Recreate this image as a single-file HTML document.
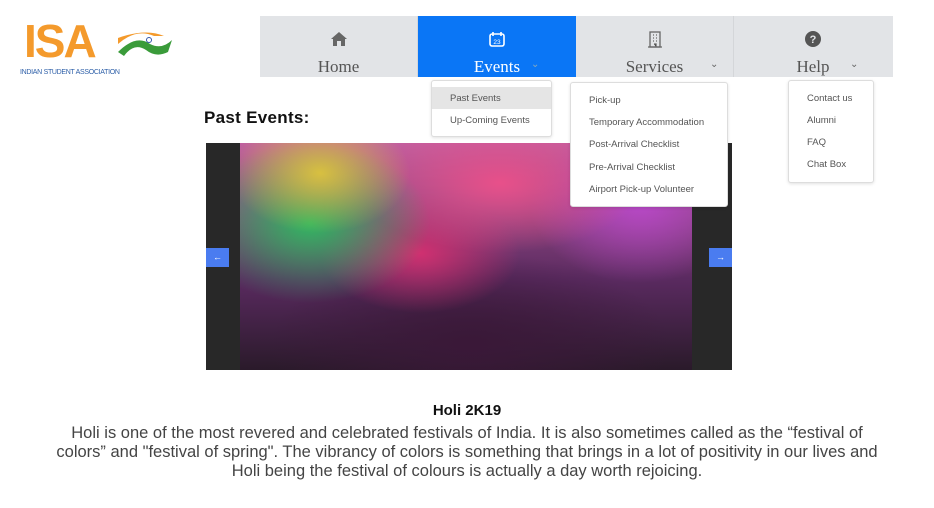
<!DOCTYPE html>
<html><head><style>
body{margin:0;width:934px;height:508px;background:#fff;position:relative;font-family:"Liberation Sans",sans-serif;overflow:hidden}
.nav{position:absolute;left:260px;top:16px;width:633px;height:61px;background:#e2e4e7;display:flex}
.tab{width:158px;height:61px;position:relative;text-align:center;font-family:"Liberation Serif",serif;font-size:17px;color:#555;border-right:1px solid #d4d6d9;box-sizing:border-box}
.tab .lbl{position:absolute;top:41px;left:0;right:0}
.tab svg{position:absolute;top:14px;left:50%;margin-left:-9px}
.car{position:absolute;top:43px;font-size:10px;color:#666;font-family:"Liberation Sans",sans-serif}
.dd{position:absolute;z-index:5;background:#fff;border:1px solid #ddd;border-radius:3px;box-shadow:0 1px 3px rgba(0,0,0,.12);font-size:9.5px;color:#555}
.dd div{position:absolute;left:18px}
</style></head><body>
<div style="position:absolute;left:22px;top:16px;width:130px;height:62px">
<div style="position:absolute;left:2px;top:0;font:900 46px/50px 'Liberation Sans',sans-serif;color:#f49a2c;letter-spacing:-2px">ISA</div>
<svg style="position:absolute;left:94px;top:10px" width="58" height="30"><path d="M2 26 Q20 8 34 18 Q46 24 56 14 L52 26 Q40 32 30 24 Q18 16 8 30Z" fill="#3a9b3a"/><path d="M2 18 Q20 2 38 10 L48 10 Q30 2 2 12Z" fill="#f49a2c"/><circle cx="33" cy="14" r="2.5" fill="none" stroke="#3355aa" stroke-width="1"/></svg>
<div style="position:absolute;left:-2px;top:53px;font-size:7px;color:#2d5fa8;white-space:nowrap;letter-spacing:-.3px">INDIAN STUDENT ASSOCIATION</div>
</div>
<div class="nav">
<div class="tab"><svg width="18" height="18" viewBox="0 0 18 18"><path d="M1 9 L9 2 L17 9 L15 9 L15 16 L11 16 L11 11 L7 11 L7 16 L3 16 L3 9Z" fill="#666"/></svg><div class="lbl">Home</div></div>
<div class="tab" style="background:#0a76f6;color:#fff;border:none"><svg width="18" height="18" viewBox="0 0 18 18"><rect x="2" y="4" width="14" height="12" rx="2" fill="none" stroke="#fff" stroke-width="1.6"/><path d="M5 2v4M13 2v4" stroke="#fff" stroke-width="1.6"/><text x="9" y="14" font-size="6.5" fill="#fff" text-anchor="middle" font-family="Liberation Sans">23</text></svg><div class="lbl">Events</div><span class="car" style="left:113px;color:#8ab">⌄</span></div>
<div class="tab"><svg width="18" height="18" viewBox="0 0 18 18"><rect x="4" y="2" width="10" height="15" fill="none" stroke="#666" stroke-width="1.3"/><path d="M2 17h14M7 5h1M10 5h1M7 8h1M10 8h1M7 11h1M10 11h1M8 14h2v3" stroke="#666" stroke-width="1.3"/></svg><div class="lbl">Services</div><span class="car" style="left:134px">⌄</span></div>
<div class="tab" style="border:none"><svg width="18" height="18" viewBox="0 0 18 18"><circle cx="9" cy="9" r="8" fill="#555"/><text x="9" y="13" font-size="11" font-weight="bold" fill="#e2e4e7" text-anchor="middle" font-family="Liberation Sans">?</text></svg><div class="lbl">Help</div><span class="car" style="left:116px">⌄</span></div>
</div>
<div class="dd" style="left:431px;top:80px;width:119px;height:55px"><div style="left:0;right:0;top:6px;height:22px;background:#e5e5e5"></div><div style="top:12px">Past Events</div><div style="top:34px">Up-Coming Events</div></div>
<div class="dd" style="left:570px;top:82px;width:156px;height:123px"><div style="top:12px">Pick-up</div><div style="top:34px">Temporary Accommodation</div><div style="top:56px">Post-Arrival Checklist</div><div style="top:79px">Pre-Arrival Checklist</div><div style="top:101px">Airport Pick-up Volunteer</div></div>
<div class="dd" style="left:788px;top:80px;width:84px;height:101px"><div style="top:12px">Contact us</div><div style="top:34px">Alumni</div><div style="top:56px">FAQ</div><div style="top:78px">Chat Box</div></div>
<div style="position:absolute;left:204px;top:108px;font-weight:900;font-size:17px;color:#111;letter-spacing:.3px">Past Events:</div>
<div style="position:absolute;left:206px;top:143px;width:526px;height:227px;background:#282828"></div>
<div style="position:absolute;left:240px;top:143px;width:452px;height:227px;background:
radial-gradient(ellipse 90px 60px at 80px 30px,#d8c040,transparent),
radial-gradient(ellipse 120px 80px at 70px 80px,#2fb860,transparent),
radial-gradient(ellipse 140px 70px at 260px 40px,#e8508a,transparent),
radial-gradient(ellipse 110px 80px at 400px 60px,#b848c8,transparent),
radial-gradient(ellipse 100px 60px at 180px 110px,#d03070,transparent),
radial-gradient(ellipse 200px 90px at 230px 200px,#3a1838,transparent),
linear-gradient(#c060a0,#5a2a60 60%,#2a1a2a)"></div>
<div style="position:absolute;left:206px;top:248px;width:23px;height:19px;background:#4a7cf0;color:#fff;font-size:9px;text-align:center;line-height:19px">←</div>
<div style="position:absolute;left:709px;top:248px;width:23px;height:19px;background:#4a7cf0;color:#fff;font-size:9px;text-align:center;line-height:19px">→</div>
<div style="position:absolute;left:0;width:934px;top:402px;text-align:center;font-weight:bold;font-size:15px;color:#111">Holi 2K19</div>
<div style="position:absolute;left:47px;width:840px;top:424px;text-align:center;font-size:16.5px;line-height:19px;color:#444">Holi is one of the most revered and celebrated festivals of India. It is also sometimes called as the “festival of colors” and "festival of spring". The vibrancy of colors is something that brings in a lot of positivity in our lives and Holi being the festival of colours is actually a day worth rejoicing.</div>
</body></html>
